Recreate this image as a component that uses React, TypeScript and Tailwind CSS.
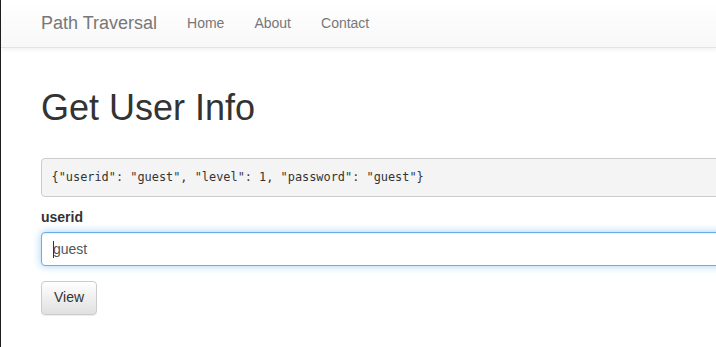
import React from "react";

const links = ["Home", "About", "Contact"];

const App: React.FC = () => {
  return (
    <div className="w-[716px] h-[347px] overflow-hidden bg-white border-l border-[#1e1e1e] font-['Liberation_Sans',Arial,sans-serif] text-[14px] text-[#333]">
      {/* navbar */}
      <div className="h-[48px] w-full flex items-center pb-[2px] border-b border-[#e3e3e3] bg-gradient-to-b from-white to-[#f8f8f8] shadow-[0_1px_5px_rgba(0,0,0,0.075)]">
        <div className="pl-[40px] flex items-center">
          <span className="text-[18px] leading-[20px] text-[#777] mr-[30px]">Path Traversal</span>
          <div className="flex gap-[30px]">
            {links.map((l) => (
              <span key={l} className="text-[14px] leading-[20px] text-[#777]">
                {l}
              </span>
            ))}
          </div>
        </div>
      </div>

      <div className="pl-[40px] w-[900px]">
        <h1 className="mt-[40px] mb-[30px] text-[36px] leading-[1.1] font-normal text-[#333]">Get User Info</h1>

        <pre className="bg-[#f4f4f4] border border-[#ccc] rounded-[4px] px-[9.5px] py-[9px] text-[11.9px] leading-[19px] text-[#333] font-['DejaVu_Sans_Mono',monospace] mb-[10px]">
          {'{"userid": "guest", "level": 1, "password": "guest"}'}
        </pre>

        <div className="mb-[15px]">
          <label className="block font-bold text-[14px] leading-[20px] mb-[5px]">userid</label>
          <div className="relative">
            <input
              readOnly
              defaultValue="guest"
              className="block w-full h-[34px] px-[11px] py-[6px] text-[14px] text-[#555] bg-white border border-[#66afe9] rounded-[4px] outline-none shadow-[inset_0_1px_1px_rgba(0,0,0,0.075),0_0_8px_rgba(102,175,233,0.6)]"
            />
            <span className="absolute left-[12px] top-[9px] w-px h-[17px] bg-[#333]" />
          </div>
        </div>

        <button className="h-[34px] px-[12px] text-[14px] text-[#333] border border-[#ccc] rounded-[4px] bg-gradient-to-b from-white to-[#e0e0e0] shadow-[inset_0_1px_0_rgba(255,255,255,0.15),0_1px_1px_rgba(0,0,0,0.075)]">
          View
        </button>
      </div>
    </div>
  );
};

export default App;
